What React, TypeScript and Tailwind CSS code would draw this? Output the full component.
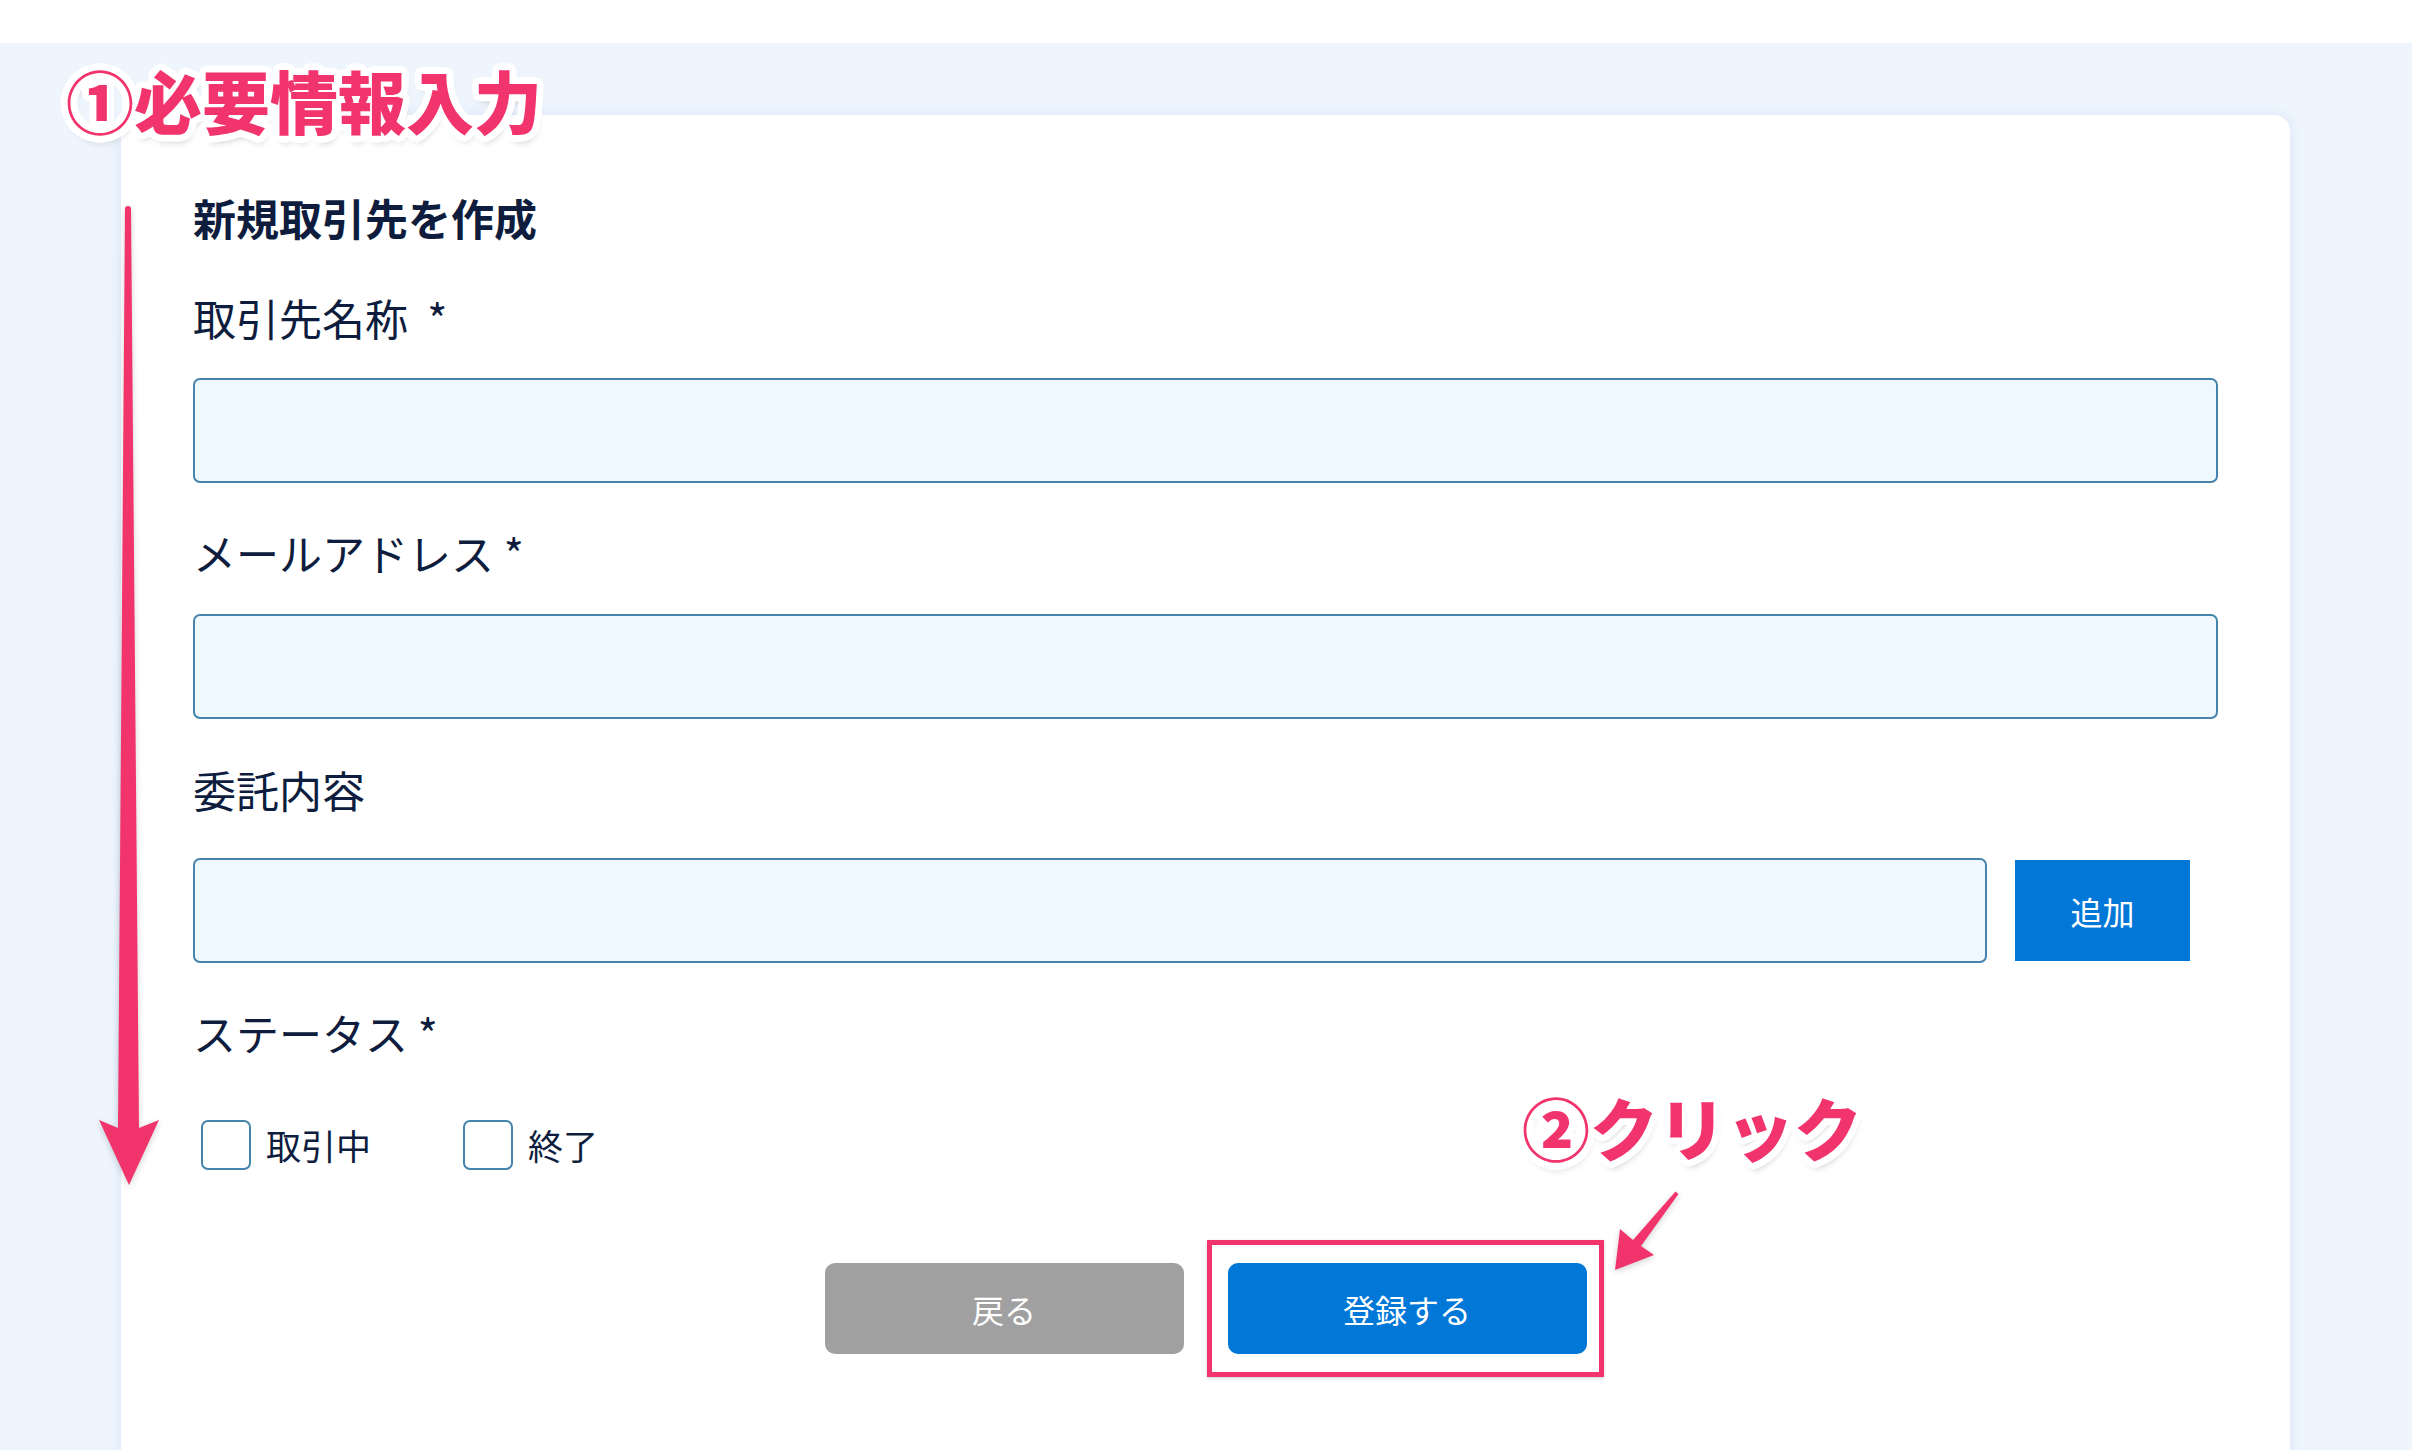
const PINK = 'text-[#f2346d]'
const OUTLINE =
  '[text-shadow:7px_0_#fff,-7px_0_#fff,0_7px_#fff,0_-7px_#fff,5px_5px_#fff,-5px_5px_#fff,5px_-5px_#fff,-5px_-5px_#fff,6px_3px_#fff,-6px_3px_#fff,6px_-3px_#fff,-6px_-3px_#fff,3px_6px_#fff,-3px_6px_#fff,3px_-6px_#fff,-3px_-6px_#fff,2px_7px_7px_rgba(0,0,0,0.22)]'

function Label({ children }: { children: React.ReactNode }) {
  return <p className="whitespace-pre text-[43px] leading-[60px] text-[#0e1c3d]">{children}</p>
}

function Field() {
  return (
    <input
      type="text"
      className="block h-[105px] w-full rounded-[7px] border-2 border-[#4584ab] bg-[#eff7ff] px-4 text-[32px] outline-none"
    />
  )
}

function Check({ label }: { label: string }) {
  return (
    <label className="flex items-center gap-[15px]">
      <span className="h-[50px] w-[50px] rounded-[7px] border-2 border-[#4584ab] bg-white" />
      <span className="text-[35px] leading-[50px] text-[#0e1c3d]">{label}</span>
    </label>
  )
}

function BigArrow() {
  return (
    <svg
      className="absolute left-[95px] top-[200px] drop-shadow-[0_2px_3px_rgba(0,0,0,0.18)]"
      width="70"
      height="990"
      viewBox="0 0 70 990"
    >
      <circle cx="33" cy="9" r="3" fill="#f2346d" />
      <polygon points="30,9 36,9 44,928 64,920 34,985 4,920 23,928" fill="#f2346d" />
    </svg>
  )
}

function SmallArrow() {
  return (
    <svg
      className="absolute left-[1600px] top-[1180px] drop-shadow-[0_2px_3px_rgba(0,0,0,0.18)]"
      width="90"
      height="100"
      viewBox="0 0 90 100"
    >
      <polygon
        points="15,90 54,75 41,66 78.5,14 75.5,11.5 33,60 20,49"
        fill="#f2346d"
      />
    </svg>
  )
}

export default function App() {
  return (
    <div className="relative h-[1450px] w-[2412px] overflow-hidden bg-white font-['Noto_Sans_CJK_JP',sans-serif]">
      <div className="h-[43px] bg-white" />
      <div className="h-[1407px] bg-[#eef5fd] pl-[121px] pt-[72px]">
        <div className="h-[1400px] w-[2169px] rounded-[16px] bg-white px-[72px] pt-[72px] shadow-[0_0_14px_rgba(120,160,220,0.18)]">
          <h1 className="text-[43px] font-bold leading-[60px] text-[#0e1c3d]">新規取引先を作成</h1>

          <div className="mt-[40px]">
            <Label>取引先名称  *</Label>
          </div>
          <div className="mt-[31px]">
            <Field />
          </div>

          <div className="mt-[39px]">
            <Label>メールアドレス *</Label>
          </div>
          <div className="mt-[32px]">
            <Field />
          </div>

          <div className="mt-[40px]">
            <Label>委託内容</Label>
          </div>
          <div className="mt-[39px] flex items-center gap-[28px] pr-[28px]">
            <div className="flex-1">
              <Field />
            </div>
            <button className="h-[101px] w-[175px] bg-[#0177d7] text-[32px] text-white">追加</button>
          </div>

          <div className="mt-[39px]">
            <Label>ステータス *</Label>
          </div>
          <div className="mt-[58px] flex items-center gap-[92px] pl-[8px]">
            <Check label="取引中" />
            <Check label="終了" />
          </div>

          <div className="mt-[93px] flex justify-center gap-[44px]">
            <button className="h-[91px] w-[359px] rounded-[10px] bg-[#a0a0a0] text-[32px] text-white">戻る</button>
            <div className="relative">
              <button className="h-[91px] w-[359px] rounded-[10px] bg-[#0177d7] text-[32px] text-white">
                登録する
              </button>
              <div className="absolute -bottom-[23px] -left-[21px] -right-[17px] -top-[23px] border-[5px] border-[#f2346d] shadow-[0_1px_3px_rgba(0,0,0,0.2)]" />
            </div>
          </div>
        </div>
      </div>

      <div
        className={`absolute left-[66px] top-[64px] text-[68px] font-black leading-[72px] ${PINK} ${OUTLINE}`}
      >
        ①必要情報入力
      </div>
      <div
        className={`absolute left-[1522px] top-[1091px] text-[68px] font-black leading-[72px] ${PINK} ${OUTLINE}`}
      >
        ②クリック
      </div>

      <BigArrow />
      <SmallArrow />
    </div>
  )
}
